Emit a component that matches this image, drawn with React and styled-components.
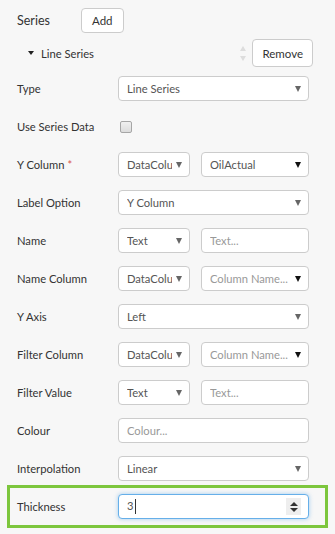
import styled, { createGlobalStyle } from 'styled-components'

const Global = createGlobalStyle`
  html, body {
    margin: 0;
    background: #f7f7f7;
  }
  body {
    font-family: Lato, "Open Sans", sans-serif;
    font-size: 11.2px;
    color: #333;
  }
`

const Page = styled.div`
  width: 335px;
  box-sizing: border-box;
  padding: 8px 26px 0 17px;
  display: flex;
  flex-direction: column;
`

const Header = styled.div`
  display: flex;
  align-items: center;
  height: 25px;
`

const Title = styled.span`
  width: 64px;
  font-size: 12.5px;
`

const Button = styled.button`
  font-family: inherit;
  font-size: 11.5px;
  color: #333;
  background: #fff;
  border: 1px solid #ccc;
  border-radius: 4px;
  height: ${(p) => p.$h || 25}px;
  padding: 0 ${(p) => p.$px || 10}px;
  cursor: pointer;
`

const SeriesRow = styled.div`
  display: flex;
  align-items: center;
  height: 28px;
  margin: 6px -4px 9px 0;
  padding-left: 11px;
`

const Caret = styled.span`
  width: 0;
  height: 0;
  border-left: 3px solid transparent;
  border-right: 3px solid transparent;
  border-top: 4px solid #222;
  margin-right: 7px;
`

const SeriesName = styled.span`
  flex: 1;
`

const Sorter = styled.div`
  display: flex;
  flex-direction: column;
  gap: 5px;
  margin-right: 6px;
`

const Tri = styled.span`
  width: 0;
  height: 0;
  border-left: 3px solid transparent;
  border-right: 3px solid transparent;
  ${(p) => (p.$up ? 'border-bottom' : 'border-top')}: 5px solid #ddd;
`

const Fields = styled.div`
  display: flex;
  flex-direction: column;
  gap: 13px;
`

const Row = styled.div`
  display: grid;
  grid-template-columns: 101px 1fr;
  align-items: center;
  min-height: 25px;
`

const Highlight = styled(Row)`
  border: 3px solid #7dc63d;
  margin: -9px -19px 0 -10px;
  padding: 6px 16px 6px 7px;
`

const Label = styled.label`
  white-space: nowrap;
`

const Req = styled.span`
  color: #d9534f;
  margin-left: 3px;
`

const Pair = styled.div`
  display: grid;
  grid-template-columns: 72px 1fr;
  gap: 11px;
`

const Box = styled.div`
  height: 25px;
  box-sizing: border-box;
  background: #fff;
  border: 1px solid ${(p) => (p.$focus ? '#66afe9' : '#ccc')};
  box-shadow: ${(p) => (p.$focus ? '0 0 4px rgba(102,175,233,0.6)' : 'none')};
  border-radius: 4px;
  padding: 0 7px 0 8px;
  display: flex;
  align-items: center;
  color: ${(p) => (p.$ph ? '#999' : '#555')};
  overflow: hidden;
  white-space: nowrap;
`

const Val = styled.span`
  flex: 1;
  overflow: hidden;
`

const Arrow = styled.span`
  width: 0;
  height: 0;
  flex: none;
  margin-left: 4px;
  border-left: 3px solid transparent;
  border-right: 3px solid transparent;
  border-top: 6px solid ${(p) => (p.$dark ? '#111' : '#666')};
`

const Check = styled.span`
  width: 12px;
  height: 12px;
  margin-left: 2px;
  box-sizing: border-box;
  border: 1px solid #a6a6a6;
  border-radius: 2px;
  background: linear-gradient(#f0f0f0, #dcdcdc);
`

const TextCaret = styled.span`
  display: inline-block;
  width: 1px;
  height: 15px;
  background: #333;
  vertical-align: middle;
  margin-left: 1px;
`

const Spin = styled.span`
  width: 15px;
  height: 17px;
  background: #eee;
  display: flex;
  flex-direction: column;
  align-items: center;
  justify-content: center;
  gap: 2px;
`

const SpinTri = styled.span`
  width: 0;
  height: 0;
  border-left: 4px solid transparent;
  border-right: 4px solid transparent;
  ${(p) => (p.$up ? 'border-bottom' : 'border-top')}: 4px solid #333;
`

function Select({ value, ph, dark }) {
  return (
    <Box $ph={ph}>
      <Val>{value}</Val>
      <Arrow $dark={dark} />
    </Box>
  )
}

function Input({ value }) {
  return (
    <Box $ph>
      <Val>{value}</Val>
    </Box>
  )
}

export default function App() {
  return (
    <>
      <Global />
      <Page>
        <Header>
          <Title>Series</Title>
          <Button>Add</Button>
        </Header>
        <SeriesRow>
          <Caret />
          <SeriesName>Line Series</SeriesName>
          <Sorter>
            <Tri $up />
            <Tri />
          </Sorter>
          <Button $h={28} $px={9}>Remove</Button>
        </SeriesRow>
        <Fields>
          <Row>
            <Label>Type</Label>
            <Select value='Line Series' />
          </Row>
          <Row>
            <Label>Use Series Data</Label>
            <Check />
          </Row>
          <Row>
            <Label>
              Y Column<Req>*</Req>
            </Label>
            <Pair>
              <Select value='DataColu' />
              <Select value='OilActual' dark />
            </Pair>
          </Row>
          <Row>
            <Label>Label Option</Label>
            <Select value='Y Column' />
          </Row>
          <Row>
            <Label>Name</Label>
            <Pair>
              <Select value='Text' />
              <Input value='Text...' />
            </Pair>
          </Row>
          <Row>
            <Label>Name Column</Label>
            <Pair>
              <Select value='DataColu' />
              <Select value='Column Name...' ph dark />
            </Pair>
          </Row>
          <Row>
            <Label>Y Axis</Label>
            <Select value='Left' />
          </Row>
          <Row>
            <Label>Filter Column</Label>
            <Pair>
              <Select value='DataColu' />
              <Select value='Column Name...' ph dark />
            </Pair>
          </Row>
          <Row>
            <Label>Filter Value</Label>
            <Pair>
              <Select value='Text' />
              <Input value='Text...' />
            </Pair>
          </Row>
          <Row>
            <Label>Colour</Label>
            <Input value='Colour...' />
          </Row>
          <Row>
            <Label>Interpolation</Label>
            <Select value='Linear' />
          </Row>
          <Highlight>
            <Label>Thickness</Label>
            <Box $focus>
              <Val>
                3<TextCaret />
              </Val>
              <Spin>
                <SpinTri $up />
                <SpinTri />
              </Spin>
            </Box>
          </Highlight>
        </Fields>
      </Page>
    </>
  )
}
